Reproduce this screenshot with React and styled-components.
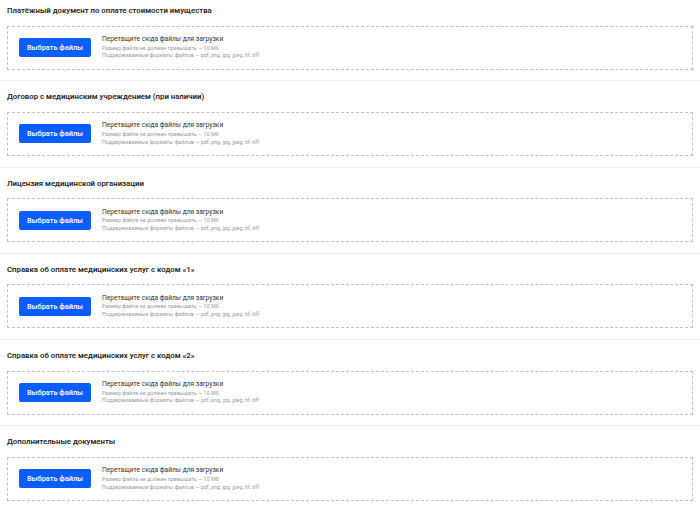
import styled, { createGlobalStyle } from "styled-components";

const GlobalStyle = createGlobalStyle`
    body {
        margin: 0;
        background: #fff;
        font-family: Roboto, "Noto Sans", "Liberation Sans", sans-serif;
    }
`

const Page = styled.div`
    width: 700px;
    display: flex;
    flex-direction: column;
`

const Section = styled.section`
    padding: 10px 7px 10.75px 7px;
    border-top: 1px solid #edf0f6;
    &:first-child {
        padding-top: 5px;
        border-top: none;
    }
`

const Title = styled.div`
    font-size: 7.8px;
    line-height: 12px;
    font-weight: 600;
    color: #262626;
    margin-bottom: 8.5px;
`

const DropZone = styled.div`
    height: 44px;
    box-sizing: border-box;
    border: 1px dashed #c2c2c2;
    display: flex;
    align-items: center;
    padding: 0 11px;
    gap: 11px;
`

const PickButton = styled.button`
    width: 72px;
    height: 19px;
    padding: 0;
    border: none;
    border-radius: 2px;
    background-color: #0a5dff;
    color: #fff;
    font-family: inherit;
    font-size: 7.4px;
    font-weight: 500;
    cursor: pointer;
`

const Hints = styled.div`
    display: flex;
    flex-direction: column;
    margin-top: -1px;
`

const HintMain = styled.div`
    font-size: 6.65px;
    line-height: 10px;
    color: #333;
    margin-bottom: 0.6px;
`

const HintSmall = styled.div`
    font-size: 5.4px;
    line-height: 7.6px;
    color: #9c9c9c;
`

const docs = [
    'Платёжный документ по оплате стоимости имущества',
    'Договор с медицинским учреждением (при наличии)',
    'Лицензия медицинской организации',
    'Справка об оплате медицинских услуг с кодом «1»',
    'Справка об оплате медицинских услуг с кодом «2»',
    'Дополнительные документы',
];

const UploadSection = ({title}) => (
    <Section>
        <Title>{title}</Title>
        <DropZone>
            <PickButton>{'Выбрать файлы'}</PickButton>
            <Hints>
                <HintMain>{'Перетащите сюда файлы для загрузки'}</HintMain>
                <HintSmall>{'Размер файла не должен превышать — 10 Мб'}</HintSmall>
                <HintSmall>{'Поддерживаемые форматы файлов — pdf, png, jpg, jpeg, tif, tiff'}</HintSmall>
            </Hints>
        </DropZone>
    </Section>
);

const App = () => {
    return(
        <Page>
            <GlobalStyle />
            {docs.map(d => <UploadSection key={d} title={d} />)}
        </Page>
    );
}

export default App;
